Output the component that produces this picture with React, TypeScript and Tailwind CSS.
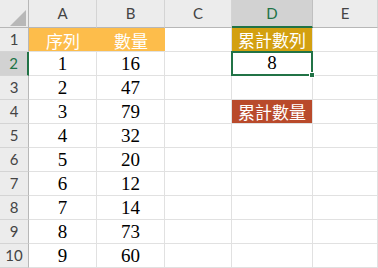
import React from "react"

const cols = ["A", "B", "C", "D", "E"]
const data: [number, number][] = [
  [1, 16],
  [2, 47],
  [3, 79],
  [4, 32],
  [5, 20],
  [6, 12],
  [7, 14],
  [8, 73],
  [9, 60],
]

const sans = { fontFamily: "Lato, 'Liberation Sans', sans-serif" }
const serif = { fontFamily: "'Liberation Serif', 'Noto Sans CJK TC', serif" }
const cjk = { fontFamily: "'Noto Sans CJK TC', 'Liberation Serif', serif" }

function Cell({ children, className = "" }: { children?: React.ReactNode; className?: string }) {
  return (
    <div
      className={
        "flex items-end justify-center border-r border-b border-[#e1e1e1] text-[19px] leading-[22px] text-black " +
        className
      }
      style={serif}
    >
      {children}
    </div>
  )
}

function RowHead({ n, active = false }: { n: number; active?: boolean }) {
  return (
    <div
      className={
        "flex items-center justify-center border-b border-[#d4d4d4] text-[15px] " +
        (active
          ? "bg-[#d2d2d2] text-[#217346] border-r-2 border-r-[#217346]"
          : "bg-[#ececec] text-[#444] border-r border-r-[#b7b7b7]")
      }
      style={sans}
    >
      {n}
    </div>
  )
}

function Label({ text, bg }: { text: string; bg: string }) {
  return (
    <div
      className={"flex items-center justify-center border-r border-b border-[#e1e1e1] text-[17px] text-white " + bg}
      style={cjk}
    >
      {text}
    </div>
  )
}

export default function App() {
  return (
    <div className="w-[378px] h-[268px] overflow-hidden bg-white">
      <div className="grid grid-cols-[29px_68px_68px_67px_81px_65px] grid-rows-[28px_repeat(10,24px)]">
        {/* corner */}
        <div className="relative bg-[#ececec] border-r border-b border-[#b7b7b7]">
          <svg className="absolute left-[10px] top-[10px]" width="16" height="16" viewBox="0 0 16 16">
            <polygon points="16,0 16,16 0,16" fill="#b8b8b8" />
          </svg>
        </div>
        {cols.map((c) => (
          <div
            key={c}
            className={
              "flex items-center justify-center border-r text-[15px] " +
              (c === "D"
                ? "bg-[#d2d2d2] text-[#217346] border-r-[#c0c0c0] border-b-2 border-b-[#217346]"
                : "bg-[#ececec] text-[#444] border-r-[#d4d4d4] border-b border-b-[#b7b7b7]")
            }
            style={sans}
          >
            {c}
          </div>
        ))}

        {/* row 1 */}
        <RowHead n={1} />
        <div
          className="col-span-2 grid grid-cols-[68px_68px] bg-[#fdbd4b] border-b border-[#e1e1e1] text-[17px] text-white"
          style={cjk}
        >
          <div className="flex items-center justify-center">序列</div>
          <div className="flex items-center justify-center">數量</div>
        </div>
        <Cell />
        <Label text="累計數列" bg="bg-[#d3a010]" />
        <Cell />

        {data.map(([a, b], i) => {
          const r = i + 2
          return (
            <React.Fragment key={r}>
              <RowHead n={r} active={r === 2} />
              <Cell>{a}</Cell>
              <Cell>{b}</Cell>
              <Cell />
              {r === 2 ? (
                <div className="relative -mt-px -ml-px flex items-end justify-center border-2 border-[#217346] text-[19px] leading-[22px]" style={serif}>
                  8
                  <div className="absolute -right-[4px] -bottom-[4px] h-[6px] w-[6px] bg-[#217346] border border-white" />
                </div>
              ) : r === 4 ? (
                <Label text="累計數量" bg="bg-[#b94a2b]" />
              ) : (
                <Cell />
              )}
              <Cell />
            </React.Fragment>
          )
        })}
      </div>
    </div>
  )
}
